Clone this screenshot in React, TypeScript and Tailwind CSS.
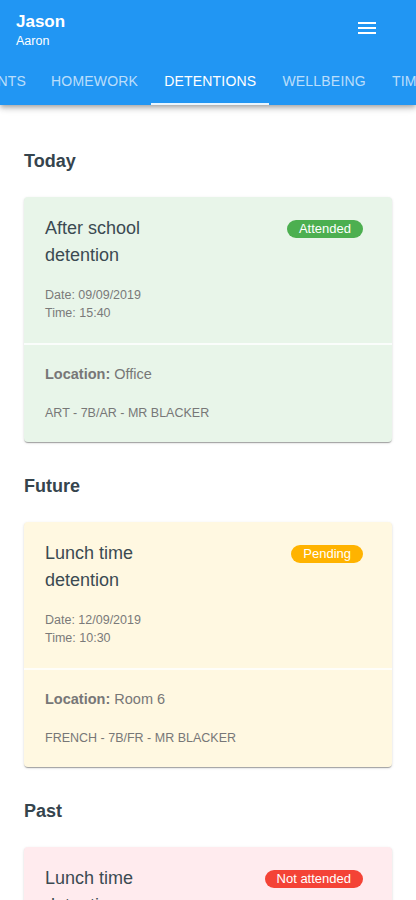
import React from "react";

type Detention = {
  title: string;
  status: "Attended" | "Pending" | "Not attended";
  date: string;
  time: string;
  location: string;
  lesson: string;
};

type Section = {
  heading: string;
  items: Detention[];
};

const sections: Section[] = [
  {
    heading: "Today",
    items: [
      {
        title: "After school detention",
        status: "Attended",
        date: "09/09/2019",
        time: "15:40",
        location: "Office",
        lesson: "ART - 7B/AR - MR BLACKER",
      },
    ],
  },
  {
    heading: "Future",
    items: [
      {
        title: "Lunch time detention",
        status: "Pending",
        date: "12/09/2019",
        time: "10:30",
        location: "Room 6",
        lesson: "FRENCH - 7B/FR - MR BLACKER",
      },
    ],
  },
  {
    heading: "Past",
    items: [
      {
        title: "Lunch time detention",
        status: "Not attended",
        date: "02/09/2019",
        time: "12:45",
        location: "Room 12",
        lesson: "MATHS - 7B/MA - MR BLACKER",
      },
    ],
  },
];

const cardStyles = {
  Attended: { card: "bg-[#e8f5e9]", badge: "bg-[#4caf50]" },
  Pending: { card: "bg-[#fff8e1]", badge: "bg-[#ffb300]" },
  "Not attended": { card: "bg-[#ffebee]", badge: "bg-[#f44336]" },
};

const tabs = ["HOMEWORK", "DETENTIONS", "WELLBEING", "TIMETABLE"];

function MenuIcon() {
  return (
    <svg width="24" height="24" viewBox="0 0 24 24" fill="white">
      <path d="M3 18h18v-2H3v2zm0-5h18v-2H3v2zm0-7v2h18V6H3z" />
    </svg>
  );
}

function DetentionCard({ item }: { item: Detention }) {
  const style = cardStyles[item.status];
  return (
    <div
      className={`${style.card} rounded-[4px] shadow-[0_2px_1px_-1px_rgba(0,0,0,0.2),0_1px_1px_0_rgba(0,0,0,0.14),0_1px_3px_0_rgba(0,0,0,0.12)]`}
    >
      <div className="pl-[21px] pr-[29px] pt-[18px] pb-[21px]">
        <div className="flex items-start justify-between">
          <h3 className="w-1/2 text-[18px] leading-[27px] text-[#3b4a52]">{item.title}</h3>
          <span
            className={`${style.badge} mt-[5px] h-[18px] rounded-full px-3 text-[13px] leading-[18px] text-white whitespace-nowrap`}
          >
            {item.status}
          </span>
        </div>
        <div className="mt-[17px] text-[12.5px] leading-[18px] text-[#7a7a7a]">
          <p>Date: {item.date}</p>
          <p>Time: {item.time}</p>
        </div>
      </div>
      <div className="h-[2px] bg-white/80" />
      <div className="px-[21px] pt-[19px] pb-[20px] text-[#777]">
        <p className="text-[14.5px] leading-[20px]">
          <span className="font-bold">Location:</span> {item.location}
        </p>
        <p className="mt-[20px] text-[12.5px] leading-[18px]">{item.lesson}</p>
      </div>
    </div>
  );
}

export default function App() {
  return (
    <div className="min-h-screen bg-white font-['Liberation_Sans',Arial,sans-serif]">
      <header className="relative z-10 bg-[#2196f3] text-white shadow-[0_2px_4px_-1px_rgba(0,0,0,0.2),0_4px_5px_0_rgba(0,0,0,0.14),0_1px_10px_0_rgba(0,0,0,0.12)]">
        <div className="flex items-start justify-between pl-4 pr-[37px] pt-[12px]">
          <div>
            <h1 className="text-[17px] font-bold leading-[20px]">Jason</h1>
            <p className="mt-[1px] text-[12.5px] leading-[17px]">Aaron</p>
          </div>
          <div className="pt-[4px]">
            <MenuIcon />
          </div>
        </div>
        <nav className="mt-[7px] flex h-[48px] overflow-hidden whitespace-nowrap text-[14px] tracking-[0.2px]">
          <div className="flex w-[38px] shrink-0 items-center justify-end overflow-hidden pr-3 text-white/70">
            ACHIEVEMENTS
          </div>
          {tabs.map((tab) => {
            const active = tab === "DETENTIONS";
            return (
              <div
                key={tab}
                className={`relative flex shrink-0 items-center px-[13px] ${active ? "text-white" : "text-white/70"}`}
              >
                {tab}
                {active && <span className="absolute bottom-0 left-0 right-0 h-[2px] bg-white/90" />}
              </div>
            );
          })}
        </nav>
      </header>

      <main className="px-6 pt-[44px] pb-8">
        {sections.map((section, i) => (
          <section key={section.heading} className={i > 0 ? "mt-[32px]" : ""}>
            <h2 className="mb-[24px] text-[18px] font-bold leading-[24px] text-[#35444d]">
              {section.heading}
            </h2>
            <div className="flex flex-col gap-6">
              {section.items.map((item, j) => (
                <DetentionCard key={j} item={item} />
              ))}
            </div>
          </section>
        ))}
      </main>
    </div>
  );
}
